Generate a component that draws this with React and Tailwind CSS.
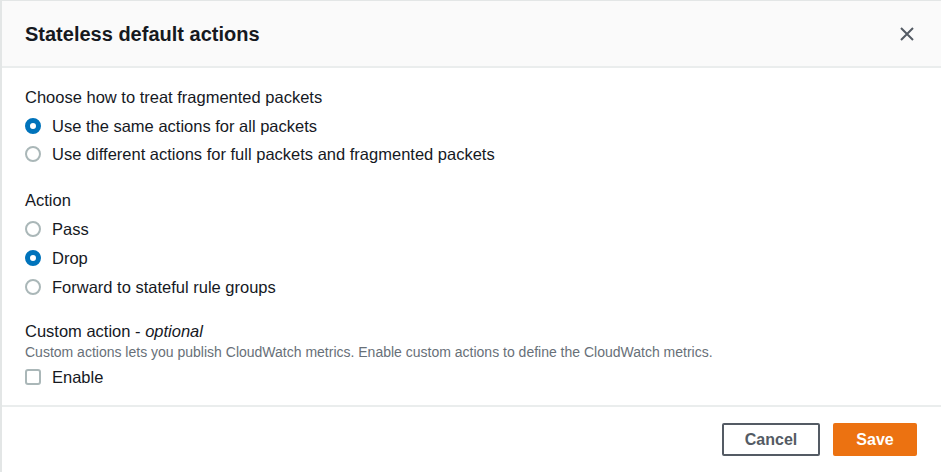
import React from "react";

function Radio({ checked, label, h }) {
  return (
    <div className={`flex items-center ${h}`}>
      {checked ? (
        <span className="box-border h-[16px] w-[16px] rounded-full border-[5px] border-[#0073bb] bg-white" />
      ) : (
        <span className="box-border h-[16px] w-[16px] rounded-full border-2 border-[#aab7b8] bg-white" />
      )}
      <span className="ml-[11px] text-[16.5px] leading-[22px] text-[#16191f]">{label}</span>
    </div>
  );
}

export default function App() {
  return (
    <div
      className="flex h-[472px] w-[941px] flex-col border-l-2 border-t border-[#e3e6e6] bg-white"
      style={{ fontFamily: '"Liberation Sans", Arial, sans-serif' }}
    >
      <div className="flex h-[67px] items-center justify-between border-b-2 border-[#eaeded] bg-[#fafafa] pl-[23px] pr-[26px]">
        <h1 className="text-[20px] font-bold leading-[24px] text-[#16191f]">Stateless default actions</h1>
        <svg width="16" height="16" viewBox="0 0 16 16" fill="none">
          <path d="M2 2 L14 14 M14 2 L2 14" stroke="#545b64" strokeWidth="2" />
        </svg>
      </div>

      <div className="flex flex-1 flex-col px-[23px] pt-[18px]">
        <div className="text-[16.5px] leading-[22px] text-[#16191f]">Choose how to treat fragmented packets</div>
        <div className="mt-[4px] flex flex-col">
          <Radio h="h-[28px]" checked label="Use the same actions for all packets" />
          <Radio h="h-[28px]" label="Use different actions for full packets and fragmented packets" />
        </div>

        <div className="mt-[21px] text-[16.5px] leading-[22px] text-[#16191f]">Action</div>
        <div className="mt-[3px] flex flex-col">
          <Radio h="h-[29px]" label="Pass" />
          <Radio h="h-[29px]" checked label="Drop" />
          <Radio h="h-[29px]" label="Forward to stateful rule groups" />
        </div>

        <div className="mt-[19px] text-[16.5px] leading-[22px] text-[#16191f]">
          Custom action - <i>optional</i>
        </div>
        <div className="mt-[1px] text-[14px] leading-[18px] text-[#687078]">
          Custom actions lets you publish CloudWatch metrics. Enable custom actions to define the CloudWatch metrics.
        </div>
        <div className="mt-[2px] flex h-[28px] items-center">
          <span className="box-border h-[16px] w-[16px] rounded-[3px] border-2 border-[#aab7b8] bg-white" />
          <span className="ml-[11px] text-[16.5px] leading-[22px] text-[#16191f]">Enable</span>
        </div>
      </div>

      <div className="flex h-[67px] items-start justify-end gap-[13px] border-t-2 border-[#eaeded] pr-[24px] pt-[16px]">
        <button className="box-border h-[33px] w-[98px] rounded-[2px] border-2 border-[#545b64] bg-white text-[16px] font-bold text-[#545b64]">
          Cancel
        </button>
        <button className="box-border h-[33px] w-[84px] rounded-[2px] bg-[#ec7211] text-[16px] font-bold text-white">
          Save
        </button>
      </div>
    </div>
  );
}
